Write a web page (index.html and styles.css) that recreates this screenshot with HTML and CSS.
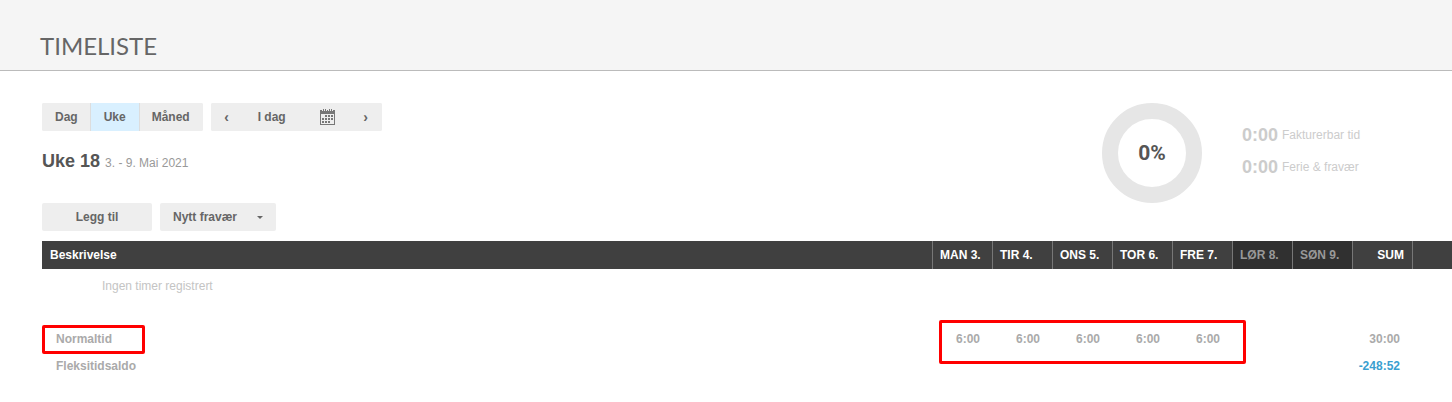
FILE: index.html
```html
<!DOCTYPE html>
<html lang="no">

<head>
    <meta charset="UTF-8">
    <title>Timeliste</title>
    <link rel="stylesheet" href="styles.css">
</head>

<body>
    <header class="page-header">
        <h1>TIMELISTE</h1>
    </header>

    <main>
        <div class="top">
            <div class="controls">
                <div class="toolbar">
                    <div class="group">
                        <button type="button">Dag</button>
                        <button type="button" class="active">Uke</button>
                        <button type="button">Måned</button>
                    </div>
                    <div class="group nav">
                        <button type="button" class="arrow" aria-label="Forrige uke">‹</button>
                        <button type="button" class="today">I dag</button>
                        <button type="button" class="calendar" aria-label="Velg dato">
                            <svg width="15" height="16" viewBox="0 0 15 16" shape-rendering="crispEdges">
                                <path fill="#777" d="M0 2h15v14H0zM1 5v10h13V5z" fill-rule="evenodd"/>
                                <path fill="#777" d="M0 1h2v1h-2zM3 0h1v2h-1zM5 0h1v2h-1zM7 1h1v1h-1zM9 0h1v2h-1zM11 0h1v2h-1zM13 1h2v1h-2z"/>
                                <path fill="#777" d="M5 6h2v2h-2zM8 6h2v2h-2zM11 6h2v2h-2zM2 9h2v2h-2zM5 9h2v2h-2zM8 9h2v2h-2zM11 9h2v2h-2zM2 12h2v2h-2zM5 12h2v2h-2zM8 12h2v2h-2z"/>
                            </svg>
                        </button>
                        <button type="button" class="arrow" aria-label="Neste uke">›</button>
                    </div>
                </div>
                <h2>Uke 18 <small>3. - 9. Mai 2021</small></h2>
                <div class="actions">
                    <button type="button" class="add">Legg til</button>
                    <button type="button" class="absence">Nytt fravær <span class="caret"></span></button>
                </div>
            </div>

            <div class="summary">
                <div class="donut">0%</div>
                <ul class="stats">
                    <li><strong>0:00</strong> <span>Fakturerbar tid</span></li>
                    <li><strong>0:00</strong> <span>Ferie &amp; fravær</span></li>
                </ul>
            </div>
        </div>

        <table class="timesheet">
            <colgroup>
                <col>
                <col class="day" span="7">
                <col class="day">
                <col class="end">
            </colgroup>
            <thead>
                <tr>
                    <th>Beskrivelse</th>
                    <th>MAN 3.</th>
                    <th>TIR 4.</th>
                    <th>ONS 5.</th>
                    <th>TOR 6.</th>
                    <th>FRE 7.</th>
                    <th class="weekend">LØR 8.</th>
                    <th class="weekend">SØN 9.</th>
                    <th class="sum">SUM</th>
                    <th></th>
                </tr>
            </thead>
            <tbody>
                <tr>
                    <td class="empty" colspan="10">Ingen timer registrert</td>
                </tr>
            </tbody>
            <tfoot>
                <tr>
                    <td class="name">Normaltid<span class="mark mark-name"></span></td>
                    <td>6:00<span class="mark mark-hours"></span></td>
                    <td>6:00</td>
                    <td>6:00</td>
                    <td>6:00</td>
                    <td>6:00</td>
                    <td></td>
                    <td></td>
                    <td>30:00</td>
                    <td></td>
                </tr>
                <tr>
                    <td class="name">Fleksitidsaldo</td>
                    <td colspan="7"></td>
                    <td class="balance">-248:52</td>
                    <td></td>
                </tr>
            </tfoot>
        </table>
    </main>
</body>

</html>
```

FILE: styles.css
```css
* {box-sizing: border-box;}

body {
    margin: 0;
    background-color: #fff;
    color: #555;
    font-family: "Liberation Sans", Arial, sans-serif;
    font-size: 12px;
}

/* header */
.page-header {
    padding: 31px 40px 9px;
    background-color: #f5f5f5;
    border-bottom: 1px solid #bbb;
}
.page-header h1 {
    margin: 0;
    color: #666;
    font-family: Lato, sans-serif;
    font-size: 24px;
    font-weight: 400;
    line-height: 30px;
}

main {padding: 32px 0 0 42px;}

/* buttons */
button {
    height: 28px;
    padding: 0 13px;
    border: none;
    border-radius: 2px;
    background-color: #eee;
    color: #666;
    font-family: inherit;
    font-size: 12px;
    font-weight: bold;
    cursor: pointer;
}

.top {
    display: flex;
    justify-content: space-between;
}
.toolbar, .actions {
    display: flex;
    gap: 8px;
}
.group {
    display: flex;
    border-radius: 2px;
    background-color: #eee;
    overflow: hidden;
}
.group button {border-radius: 0;}
.group .active {
    z-index: 1;
    margin: 0 -1px;
    border: 1px solid #ddd;
    border-width: 0 1px;
    background-color: #d9f0ff;
}
.nav .arrow {
    width: 32px;
    padding: 0;
    font-size: 14px;
}
.nav .today {width: 58px;}
.nav .calendar {
    display: flex;
    align-items: center;
    width: 49px;
    padding: 0 0 0 19px;
}

h2 {
    margin: 20px 0 32px;
    font-size: 18px;
    line-height: 20px;
    height: 20px;
}
h2 small {
    color: #999;
    font-size: 12px;
    font-weight: normal;
    line-height: 12px;
}

.add {width: 110px;}
.absence {
    display: flex;
    align-items: center;
    gap: 20px;
}
.caret {
    border: 3px solid transparent;
    border-top-color: #666;
    border-bottom: none;
}

/* summary */
.summary {
    display: flex;
    align-items: flex-start;
    gap: 40px;
    width: 350px;
}
.donut {
    display: flex;
    align-items: center;
    justify-content: center;
    width: 100px;
    height: 100px;
    border: 16px solid #e6e6e6;
    border-radius: 50%;
    font-family: Roboto, sans-serif;
    font-size: 21px;
    font-weight: bold;
    line-height: 24px;
}
.stats {
    margin: 16px 0 0;
    padding: 0;
    list-style: none;
    color: #ccc;
}
.stats li {
    display: flex;
    align-items: center;
    gap: 4px;
    height: 32px;
}
.stats strong {font-size: 18px;}

/* timesheet */
.timesheet {
    width: 100%;
    margin-top: 10px;
    border-collapse: collapse;
    table-layout: fixed;
}
.day {width: 60px;}
.end {width: 40px;}
th {
    height: 28px;
    padding: 0 7px 0 8px;
    background-color: #404040;
    color: #fff;
    text-align: left;
    white-space: nowrap;
}
th + th {box-shadow: inset 1px 0 #777;}
.weekend {
    background-color: #303030;
    color: #999;
}
.sum {
    padding-right: 8px;
    text-align: right;
}
td {
    position: relative;
    height: 27px;
    padding: 0 12px 0 0;
    color: #aaa;
    text-align: right;
}
td.empty {
    height: 56px;
    padding: 10px 0 0 60px;
    color: #c4c4c4;
    text-align: left;
    vertical-align: top;
}
tfoot td {font-weight: bold;}
tfoot .name {
    padding-left: 14px;
    text-align: left;
}
td.balance {color: #3a9fd0;}

/* red frames over the table */
.mark {
    position: absolute;
    border: 3px solid #f00;
    border-radius: 2px;
}
.mark-name {
    top: 0;
    left: 0;
    width: 103px;
    height: 29px;
}
.mark-hours {
    top: -5px;
    left: 7px;
    width: 307px;
    height: 44px;
}
```
